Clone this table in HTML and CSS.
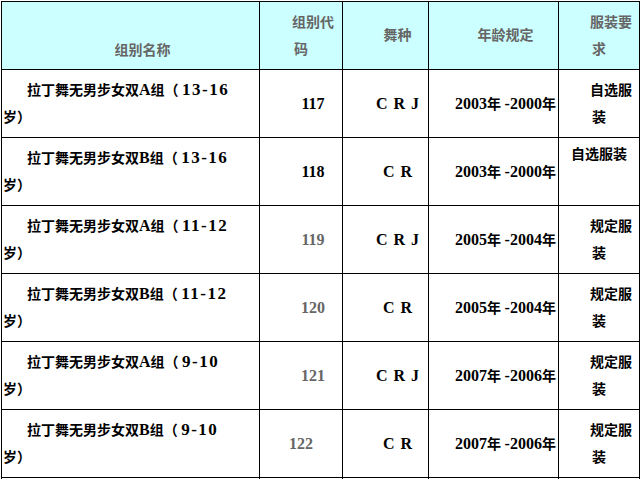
FILE: index.html
```html
<!DOCTYPE html>
<html lang="zh-CN">
<head>
<meta charset="utf-8">
<title>组别</title>
<link rel="stylesheet" href="styles.css">
</head>
<body>
<table class="grid">
  <colgroup>
    <col class="c1"><col class="c2"><col class="c3"><col class="c4"><col class="c5">
  </colgroup>
  <tr class="head">
    <td class="bottom">组别名称</td>
    <td>组别代码</td>
    <td>舞种</td>
    <td>年龄规定</td>
    <td>服装要求</td>
  </tr>
  <tr>
    <td class="name">拉丁舞无男步女双<span class="n">A</span>组（ <span class="nm">13-16</span>岁）</td>
    <td class="n">117</td>
    <td class="n dance">C R J</td>
    <td><span class="n">2003</span>年 <span class="n">-2000</span>年</td>
    <td>自选服装</td>
  </tr>
  <tr>
    <td class="name">拉丁舞无男步女双<span class="n">B</span>组（ <span class="nm">13-16</span>岁）</td>
    <td class="n">118</td>
    <td class="n dance">C R</td>
    <td><span class="n">2003</span>年 <span class="n">-2000</span>年</td>
    <td class="noind top">自选服装</td>
  </tr>
  <tr>
    <td class="name">拉丁舞无男步女双<span class="n">A</span>组（ <span class="nm">11-12</span>岁）</td>
    <td class="n dim">119</td>
    <td class="n dance">C R J</td>
    <td><span class="n">2005</span>年 <span class="n">-2004</span>年</td>
    <td>规定服装</td>
  </tr>
  <tr>
    <td class="name">拉丁舞无男步女双<span class="n">B</span>组（ <span class="nm">11-12</span>岁）</td>
    <td class="n dim">120</td>
    <td class="n dance">C R</td>
    <td><span class="n">2005</span>年 <span class="n">-2004</span>年</td>
    <td>规定服装</td>
  </tr>
  <tr>
    <td class="name">拉丁舞无男步女双<span class="n">A</span>组（ <span class="nm">9-10</span>岁）</td>
    <td class="n dim">121</td>
    <td class="n dance">C R J</td>
    <td><span class="n">2007</span>年 <span class="n">-2006</span>年</td>
    <td>规定服装</td>
  </tr>
  <tr>
    <td class="name">拉丁舞无男步女双<span class="n">B</span>组（ <span class="nm">9-10</span>岁）</td>
    <td class="n dim noind">122</td>
    <td class="n dance">C R</td>
    <td><span class="n">2007</span>年 <span class="n">-2006</span>年</td>
    <td>规定服装</td>
  </tr>
  <tr class="next">
    <td class="name"></td>
    <td></td>
    <td></td>
    <td></td>
    <td></td>
  </tr>
</table>
</body>
</html>
```

FILE: styles.css
```css
html, body {
  margin: 0;
  background: #ffffff;
}
body {
  font-family: "Liberation Serif", "Noto Sans CJK SC", serif;
  font-weight: bold;
  font-size: 14px;
  color: #000;
}
.grid {
  border-collapse: collapse;
  table-layout: fixed;
  width: 639px;
  margin: 1px 0 0 1px;
}
.c1 { width: 258px; }
.c2 { width: 83px; }
.c3 { width: 86px; }
.c4 { width: 130px; }
.c5 { width: 81px; }
.grid tr { height: 68px; }
.grid td {
  border: 1px solid #000;
  padding: 0 1px;
  text-indent: 24px;
  text-align: center;
  vertical-align: middle;
  line-height: 27px;
}
.head td {
  background: #ccffff;
  color: #666666;
  padding: 0 2px;
}
.head td.bottom {
  vertical-align: bottom;
  padding-bottom: 5px;
}
.grid td.name {
  text-align: left;
  padding-right: 16px;
}
.grid td.dim { color: #666666; }
.grid td.noind { text-indent: 0; }
.grid td.top { vertical-align: top; padding-top: 3px; }
.n { font-size: 16px; }
.nm { font-size: 17px; letter-spacing: 1.5px; }
.grid td.dance { word-spacing: 2px; }
```
